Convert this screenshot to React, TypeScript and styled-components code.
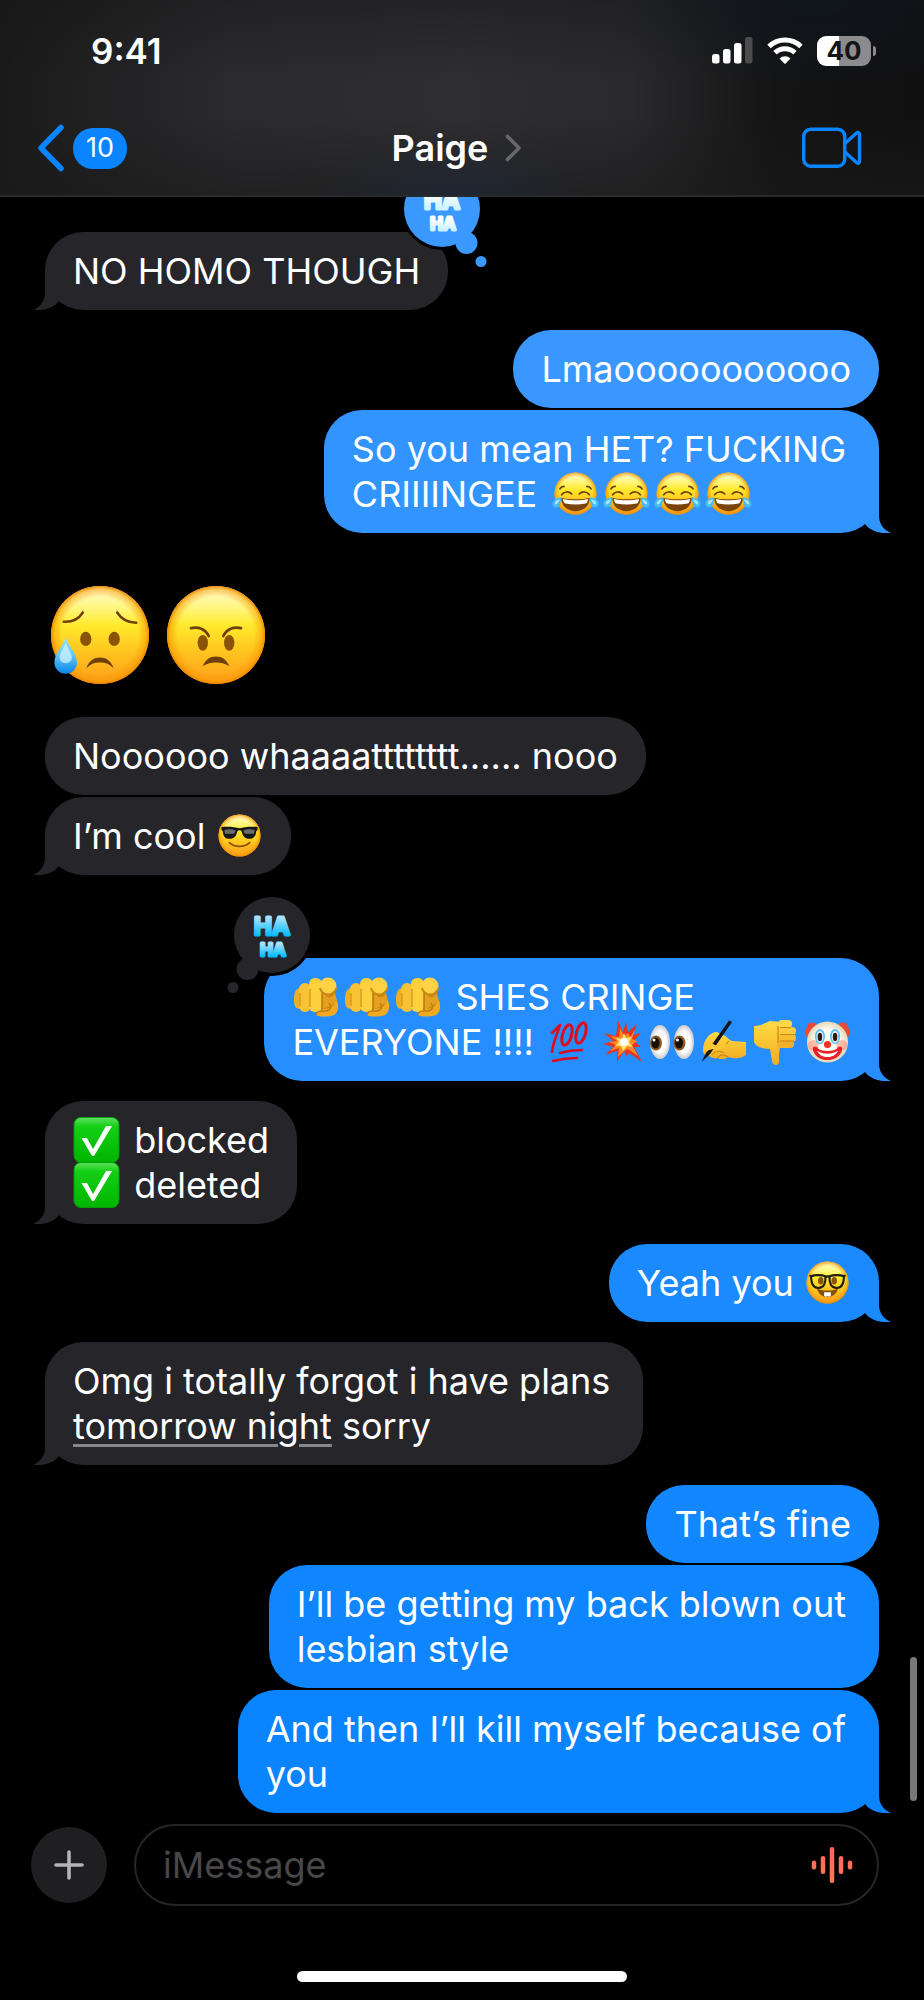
import React from "react";
import styled, { createGlobalStyle, css } from "styled-components";

const GlobalStyle = createGlobalStyle`
  * { box-sizing: border-box; }
  body {
    margin: 0;
    background: #000;
    color: #fff;
    font-family: Inter, "Liberation Sans", sans-serif;
  }
`;

const Page = styled.div`
  display: flex;
  flex-direction: column;
  min-height: 100vh;
`;

/* ---------- header ---------- */

const Header = styled.header`
  position: relative;
  z-index: 2;
  border-bottom: 2px solid #2a2a2c;
  background:
    radial-gradient(ellipse 14% 30% at 49% 100%, rgba(28, 42, 66, 0.5), transparent),
    radial-gradient(ellipse 22% 45% at 88% 0%, rgba(10, 22, 40, 0.4), transparent),
    linear-gradient(to bottom, rgba(20, 20, 21, 0.4), transparent 40%, transparent 60%, rgba(26, 26, 27, 0.6)),
    linear-gradient(to right, #1a1a1b, #2b2b2d 25%, #2e2e30 50%, #2a2a2c 68%, #141415 84%, #101011);
`;

const StatusBar = styled.div`
  display: flex;
  justify-content: space-between;
  align-items: center;
  height: 101px;
  padding: 0 48px 0 91px;
`;

const Clock = styled.time`
  font-size: 35px;
  line-height: 40px;
  font-weight: 600;
`;

const StatusIcons = styled.div`
  display: flex;
  align-items: center;
  gap: 14px;
`;

const Battery = styled.div`
  position: relative;
  display: flex;
  align-items: center;
  justify-content: center;
  width: 54px;
  height: 30px;
  margin-right: 5px;
  border-radius: 9px;
  background: linear-gradient(to right, #fff 40%, #8c8c8e 40%);
  color: #151516;
  font-size: 26px;
  line-height: 30px;
  font-weight: 700;

  &::after {
    content: "";
    position: absolute;
    left: 56px;
    top: 10px;
    width: 3px;
    height: 10px;
    border-radius: 0 4px 4px 0;
    background: #8c8c8e;
  }
`;

const NavBar = styled.nav`
  display: grid;
  grid-template-columns: 1fr auto 1fr;
  align-items: center;
  height: 94px;
  padding: 0 46px 0 36px;
`;

const PlainButton = styled.button`
  display: flex;
  align-items: center;
  padding: 0;
  border: 0;
  background: none;
  color: inherit;
  font: inherit;
  cursor: pointer;
`;

const BackButton = styled(PlainButton)`
  justify-self: start;
  gap: 7px;
`;

const CountBadge = styled.span`
  display: flex;
  align-items: center;
  justify-content: center;
  width: 54px;
  height: 41px;
  border-radius: 20px;
  background: #0a84ff;
  font-size: 27px;
  line-height: 32px;
`;

const TitleButton = styled(PlainButton)`
  gap: 17px;
  font-size: 36px;
  line-height: 45px;
  font-weight: 600;
`;

const VideoButton = styled(PlainButton)`
  justify-self: end;
  margin-right: 16px;
`;

/* ---------- thread ---------- */

const Thread = styled.main`
  position: relative;
  display: flex;
  flex-direction: column;
  gap: 20px;
  padding: 35px 45px 11px;
`;

const Group = styled.section<{ $mine?: boolean; $spaced?: boolean }>`
  display: flex;
  flex-direction: column;
  align-items: ${(p) => (p.$mine ? "flex-end" : "flex-start")};
  gap: 2px;
  ${(p) => p.$spaced && css`margin-top: 63px;`}
`;

const BigEmojiRow = styled.div`
  display: flex;
  gap: 18px;
  margin-top: 33px;
  margin-bottom: 31px;
  padding-left: 6px;
`;

const BubbleBox = styled.div<{ $color: string; $wrapped?: boolean }>`
  position: relative;
  isolation: isolate;
  padding: 17px ${(p) => (p.$wrapped ? 33 : 28)}px 16px 28px;
  border-radius: 38px;
  background: ${(p) => p.$color};
  font-size: 36px;
  line-height: 45px;
`;

const TailSvg = styled.svg<{ $mine?: boolean }>`
  position: absolute;
  z-index: -1;
  bottom: 0;
  ${(p) => (p.$mine ? "right: -12px;" : "left: -12px;")}
`;

const DateLink = styled.a`
  color: inherit;
  text-decoration: underline;
  text-decoration-color: #88888c;
  text-decoration-thickness: 3px;
  text-underline-offset: 5px;
`;

const ReactionSvg = styled.svg<{ $mine?: boolean }>`
  position: absolute;
  top: -65px;
  ${(p) => (p.$mine ? "right: -42px;" : "left: -40px;")}
`;

const ReactionText = styled.text`
  font-family: Inter, "Liberation Sans", sans-serif;
  font-weight: 700;
  stroke-width: 3px;
  stroke-linejoin: round;
`;

const ScrollThumb = styled.div`
  position: absolute;
  right: 7px;
  bottom: 23px;
  width: 7px;
  height: 144px;
  border-radius: 4px;
  background: #78787a;
`;

const InlineEmoji = styled.svg`
  width: 47px;
  height: 45px;
  vertical-align: top;
  overflow: visible;

  & + & { margin-left: 4px; }
`;

const EmojiRun = styled.span<{ $leading?: boolean }>`
  ${(p) => (p.$leading ? "margin-right: 4px;" : "margin-left: 5px;")}
`;

const LargeEmoji = styled.svg`
  width: 98px;
  height: 98px;
  overflow: visible;
`;

/* ---------- composer ---------- */

const Composer = styled.form`
  display: flex;
  align-items: center;
  gap: 27px;
  padding: 0 45px 0 31px;
`;

const AddButton = styled(PlainButton)`
  justify-content: center;
  flex: none;
  width: 76px;
  height: 76px;
  border-radius: 38px;
  background: #1f1f21;
`;

const Field = styled.div`
  display: flex;
  align-items: center;
  flex: 1;
  height: 82px;
  padding: 0 24px 0 27px;
  border: 2px solid #262628;
  border-radius: 41px;
`;

const TextInput = styled.input`
  flex: 1;
  min-width: 0;
  padding: 0;
  border: 0;
  outline: 0;
  background: none;
  color: #fff;
  font: inherit;
  font-size: 36px;
  line-height: 45px;

  &::placeholder { color: #48484b; opacity: 1; }
`;

const HomeArea = styled.footer`
  display: flex;
  justify-content: center;
  margin-top: auto;
  padding: 64px 0 18px;
`;

const HomeIndicator = styled.div`
  width: 330px;
  height: 11px;
  border-radius: 6px;
  background: #fff;
`;

/* ---------- drawings ---------- */

const HiddenDefs = styled.svg`
  position: absolute;
  width: 0;
  height: 0;
`;

const Gradients = () => (
  <HiddenDefs aria-hidden="true">
    <defs>
      <linearGradient id="face" x1="0" y1="0" x2="0" y2="1">
        <stop offset="0" stopColor="#fffbd2" />
        <stop offset="0.22" stopColor="#fff680" />
        <stop offset="0.4" stopColor="#ffea2c" />
        <stop offset="0.72" stopColor="#ffbe1e" />
        <stop offset="1" stopColor="#ff9f1c" />
      </linearGradient>
      <radialGradient id="rim">
        <stop offset="0.78" stopColor="#f58a00" stopOpacity="0" />
        <stop offset="0.93" stopColor="#f79800" stopOpacity="0.5" />
        <stop offset="1" stopColor="#ee8500" stopOpacity="0.95" />
      </radialGradient>
      <linearGradient id="tear" x1="0" y1="0" x2="0" y2="1">
        <stop offset="0" stopColor="#9fe4ff" />
        <stop offset="0.5" stopColor="#5fc8fb" />
        <stop offset="1" stopColor="#0a84e8" />
      </linearGradient>
      <linearGradient id="hand" x1="0" y1="0" x2="0" y2="1">
        <stop offset="0" stopColor="#ffdb45" />
        <stop offset="1" stopColor="#f3ac21" />
      </linearGradient>
      <linearGradient id="check" x1="0" y1="0" x2="0" y2="1">
        <stop offset="0" stopColor="#5fe05f" />
        <stop offset="0.2" stopColor="#14cf14" />
        <stop offset="1" stopColor="#00b400" />
      </linearGradient>
      <linearGradient id="haBlue" x1="0" y1="0" x2="0" y2="1">
        <stop offset="0.2" stopColor="#a6e2ff" />
        <stop offset="0.8" stopColor="#08bcff" />
      </linearGradient>
      <linearGradient id="haWhite" x1="0" y1="0" x2="0" y2="1">
        <stop offset="0.2" stopColor="#ffffff" />
        <stop offset="0.9" stopColor="#c4f0ff" />
      </linearGradient>
      <linearGradient id="wave" x1="0" y1="0" x2="0" y2="38" gradientUnits="userSpaceOnUse">
        <stop offset="0" stopColor="#ff5f63" />
        <stop offset="1" stopColor="#ff7d50" />
      </linearGradient>
      <radialGradient id="clown">
        <stop offset="0.6" stopColor="#fffdf4" />
        <stop offset="1" stopColor="#e3d6b4" />
      </radialGradient>
      <radialGradient id="eyeball">
        <stop offset="0.6" stopColor="#ffffff" />
        <stop offset="1" stopColor="#c9c9cf" />
      </radialGradient>
    </defs>
  </HiddenDefs>
);

const FaceBase = () => (
  <>
    <circle cx="50" cy="50" r="50" fill="url(#face)" />
    <circle cx="50" cy="50" r="50" fill="url(#rim)" />
  </>
);

const Brown = "#70400c";

const SadFace = () => (
  <LargeEmoji viewBox="0 0 100 100" role="img" aria-label="Sad but relieved face">
    <FaceBase />
    <g fill="none" stroke={Brown} strokeWidth="2.6" strokeLinecap="round">
      <path d="M13 36.500C21 37 28 34 32.500 27" />
      <path d="M67.500 27C72 34 79 37.500 87 37.500" />
    </g>
    <ellipse cx="35.500" cy="54" rx="5.800" ry="7.200" fill="#8a5406" />
    <ellipse cx="64.500" cy="54" rx="5.800" ry="7.200" fill="#8a5406" />
    <path d="M36 84C39 76 44 73 50 73S61 76 64 84C59 79 55 78 50 78S41 79 36 84Z" fill={Brown} />
    <path d="M15 51C16 61 26.500 67 26.500 78A11.500 11.500 0 0 1 3.500 78C3.500 67 14 61 15 51Z" fill="url(#tear)" />
    <path d="M15 58C18 66 22 69 21 75C19 80 11 80 9 75C8 69 12 66 15 58Z" fill="#d9f5ff" opacity="0.7" />
  </LargeEmoji>
);

const AngryFace = () => (
  <LargeEmoji viewBox="0 0 100 100" role="img" aria-label="Angry face">
    <FaceBase />
    <g fill="none" stroke={Brown} strokeWidth="2.8" strokeLinecap="round">
      <path d="M24.500 43C32 41 39 44 42.500 51" />
      <path d="M75.500 43C68 41 61 44 57.500 51" />
    </g>
    <ellipse cx="36.500" cy="58" rx="5.300" ry="8" fill="#8a5406" />
    <ellipse cx="63.500" cy="58" rx="5.300" ry="8" fill="#8a5406" />
    <path d="M36.500 82C39 75 44 72 50 72S61 75 63.500 82C59 79 55 78 50 78S41 79 36.500 82Z" fill={Brown} />
  </LargeEmoji>
);

const FaceEmoji = ({ label, children }: { label: string; children: React.ReactNode }) => (
  <InlineEmoji viewBox="0 0 47 45" role="img" aria-label={label}>
    <g transform="translate(2.500 0.500) scale(0.42)">
      <FaceBase />
      {children}
    </g>
  </InlineEmoji>
);

const Joy = () => (
  <FaceEmoji label="Face with tears of joy">
    <g fill="none" stroke={Brown} strokeLinecap="round" strokeWidth="4">
      <path d="M13 39C15 35 19 33 23 33" />
      <path d="M77 33C81 33 85 35 87 39" />
      <path d="M17 53C22 45 34 44 41 51" />
      <path d="M59 51C66 44 78 45 83 53" />
    </g>
    <path d="M16 60C34 65 66 65 84 60C84 80 68 92 50 92S16 80 16 60Z" fill="#7a430a" />
    <path d="M20 63C37 67 63 67 80 63C79 70 77 73 74 74C58 77 42 77 26 74C23 73 21 70 20 63Z" fill="#fff" />
    <path d="M17 60C4 58 -6 68 -5 76C-3 86 10 86 13 77Z" fill="#45bdf2" />
    <path d="M83 60C96 58 106 68 105 76C103 86 90 86 87 77Z" fill="#45bdf2" />
    <path d="M13 64C4 64 0 70 1 75C4 78 8 75 13 64Z" fill="#a9e7ff" />
    <path d="M87 64C96 64 100 70 99 75C96 78 92 75 87 64Z" fill="#a9e7ff" />
  </FaceEmoji>
);

const Cool = () => (
  <FaceEmoji label="Smiling face with sunglasses">
    <path d="M7 30C22 28 40 30 50 33C60 30 78 28 93 30V37L90 39C89 52 84 58 74 58C62 58 58 51 55 40C53 37 47 37 45 40C42 51 38 58 26 58C16 58 11 52 10 39L7 37Z" fill="#171717" />
    <path d="M14 37C22 34 34 35 41 38C39 42 38 45 37 46H16C15 43 14 40 14 37Z" fill="#6c6c6a" />
    <path d="M86 37C78 34 66 35 59 38C61 42 62 45 63 46H84C85 43 86 40 86 37Z" fill="#6c6c6a" />
    <path d="M26 67C38 79 62 79 74 67" fill="none" stroke="#8a5406" strokeWidth="4.500" strokeLinecap="round" />
  </FaceEmoji>
);

const Nerd = () => (
  <FaceEmoji label="Nerd face">
    <path d="M25 64C40 71 60 71 75 64C72 78 61 84 50 84S28 78 25 64Z" fill="#84500c" />
    <path d="M42 73H58V82C55 84 52 84 50 82C48 84 45 84 42 82Z" fill="#fff" />
    <ellipse cx="34" cy="46" rx="6.500" ry="9" fill="#8a5406" />
    <ellipse cx="66" cy="46" rx="6.500" ry="9" fill="#8a5406" />
    <g fill="none" stroke="#1d1d10" strokeWidth="5" strokeLinejoin="round">
      <path d="M11 35C20 31 37 32 45 35C46 51 42 63 28 63C15 63 11 51 11 35Z" />
      <path d="M89 35C80 31 63 32 55 35C54 51 58 63 72 63C85 63 89 51 89 35Z" />
      <path d="M45 38C48 35 52 35 55 38M7 34H12M93 34H88" />
    </g>
  </FaceEmoji>
);

const Clown = () => (
  <InlineEmoji viewBox="0 0 47 45" role="img" aria-label="Clown face">
    <g transform="translate(2.500 1) scale(0.42)">
      <path d="M24 8C14 0 2 4 2 14C-6 20 -4 36 4 40L22 24Z" fill="#e84a35" />
      <path d="M76 8C86 0 98 4 98 14C106 20 104 36 96 40L78 24Z" fill="#e84a35" />
      <circle cx="50" cy="50" r="49" fill="url(#clown)" />
      <circle cx="16" cy="58" r="13" fill="#ff8d73" opacity="0.55" />
      <circle cx="84" cy="58" r="13" fill="#ff8d73" opacity="0.55" />
      <ellipse cx="32" cy="37" rx="12" ry="18" fill="#60bdf0" />
      <ellipse cx="68" cy="37" rx="12" ry="18" fill="#60bdf0" />
      <ellipse cx="32" cy="38" rx="8" ry="14" fill="#fff" />
      <ellipse cx="68" cy="38" rx="8" ry="14" fill="#fff" />
      <ellipse cx="32" cy="38" rx="5.500" ry="10" fill="#2b1c12" />
      <ellipse cx="68" cy="38" rx="5.500" ry="10" fill="#2b1c12" />
      <circle cx="50" cy="56" r="8.500" fill="#ef3424" />
      <path d="M15 66C15 58 26 60 28 66C38 73 62 73 72 66C74 60 85 58 85 66C84 82 68 93 50 93S16 82 15 66Z" fill="#e8202a" />
      <path d="M25 71C40 80 60 80 75 71C70 82 60 86 50 86S30 82 25 71Z" fill="#fff" />
    </g>
  </InlineEmoji>
);

const PointAtYou = () => (
  <InlineEmoji viewBox="0 0 47 45" role="img" aria-label="Index pointing at the viewer">
    <path d="M9 13C4 13 2 17 2 24C2 31 3 34 9 34Z" fill="#eaae27" />
    <rect x="7" y="8" width="12" height="29" rx="6" fill="#f7c233" />
    <path d="M29 20L44 24C48 30 46 38 42 40C36 42 28 42 24 40C24 36 27 34 31 34Z" fill="#efaa22" />
    <path d="M30 10H43V26C43 31 37 34 30 34Z" fill="#c98512" />
    <path d="M31 16C34 24 40 24 43 18L45 26C40 30 34 34 30 34Z" fill="#e5a020" />
    <rect x="17" y="3" width="13" height="34" rx="6" fill="#ffd03d" />
    <path d="M18 14V32M8 18V31" stroke="#cf8f16" strokeWidth="1.200" fill="none" />
    <path d="M30 14V35" stroke="#b87a0e" strokeWidth="1.500" />
    <path d="M24 40C25 35 29 36 34 36C39 35 40 31 37 28" fill="none" stroke="#bf7d10" strokeWidth="1.500" />
    <circle cx="36" cy="11" r="8.500" fill="#ffd245" />
    <path d="M28 13C30 21 41 22 44.500 13" fill="none" stroke="#c98a15" strokeWidth="2" />
  </InlineEmoji>
);

const Hundred = () => (
  <InlineEmoji viewBox="0 0 47 45" role="img" aria-label="Hundred points">
    <g fill="none" stroke="#dc0d1d" strokeLinecap="round" strokeLinejoin="round">
      <path d="M3 13L11 5C8 14 4 23 3 32" strokeWidth="2.600" />
      <ellipse cx="18" cy="15" rx="4.500" ry="10.500" strokeWidth="3" transform="rotate(16 18 15)" />
      <ellipse cx="32" cy="13" rx="4.500" ry="10.500" strokeWidth="3" transform="rotate(16 32 13)" />
      <path d="M11 33C18 31 25 30 33 30" strokeWidth="2.600" />
      <path d="M4 41C12 39 20 38 28 38" strokeWidth="2.600" />
    </g>
  </InlineEmoji>
);

const Boom = () => (
  <InlineEmoji viewBox="0 0 47 45" role="img" aria-label="Collision">
    <path d="M18 1L23 12L26 2L28 12L37 4L33 15L41 13L34 21L41 27L34 27L42 42L29 33L27 37L24 31L17 42L17 31L5 35L13 27L3 24L13 21L4 13L16 16Z" fill="#e5341f" />
    <path d="M20 8L24 16L28 13L30 17L35 10L32 19L37 21L32 25L38 36L28 29L24 31L18 37L19 28L10 31L16 25L9 22L17 21L10 16L19 17Z" fill="#ff8a24" />
    <path d="M24 13L26 18L32 17L29 22L33 27L27 26L23 31L21 26L15 26L19 22L16 18L22 19Z" fill="#ffe36e" />
    <circle cx="24" cy="22" r="4" fill="#fff" />
  </InlineEmoji>
);

const Eyes = () => (
  <InlineEmoji viewBox="0 0 47 45" role="img" aria-label="Eyes">
    <ellipse cx="9" cy="22" rx="10" ry="17" fill="url(#eyeball)" />
    <ellipse cx="33" cy="22" rx="10" ry="17" fill="url(#eyeball)" />
    <ellipse cx="5" cy="23" rx="6" ry="7.500" fill="#8a5a20" />
    <ellipse cx="28.500" cy="23" rx="6" ry="7.500" fill="#8a5a20" />
    <ellipse cx="4.500" cy="23" rx="4" ry="5.500" fill="#160d05" />
    <ellipse cx="28" cy="23" rx="4" ry="5.500" fill="#160d05" />
    <circle cx="3" cy="20" r="1.500" fill="#fff" />
    <circle cx="26.500" cy="20" r="1.500" fill="#fff" />
  </InlineEmoji>
);

const Writing = () => (
  <InlineEmoji viewBox="0 0 47 45" role="img" aria-label="Writing hand">
    <path d="M1 30C1 20 8 12 15 12L20 15C24 15 27 20 30 21L44 22V35C38 40 30 38 26 37C22 40 17 39 15 38C9 39 8 36 6 35C2 35 1 33 1 30Z" fill="url(#hand)" />
    <path d="M15 28C20 27 24 25 27 21M10 35C13 31 18 31 22 33M16 38C18 34 22 34 26 37" fill="none" stroke="#c98718" strokeWidth="1.200" />
    <path d="M-0.500 42L4 33L27 0.500L30 2L8 34Z" fill="#141414" />
    <path d="M2 28C4 22 9 22 13 25C17 27 21 25 24 22C25 28 17 31 11 29C7 30 3 33 2 28Z" fill="#fbc733" />
  </InlineEmoji>
);

const ThumbDown = () => (
  <InlineEmoji viewBox="0 0 47 45" role="img" aria-label="Thumbs down">
    <path d="M1 6C8 6 12 3 17 1L28 2V23C26 28 26 35 26 42C26 46 19 46 19 41L17 29C10 29 3 27 1 22Z" fill="url(#hand)" />
    <rect x="25" y="0" width="14" height="8" rx="4" fill="#ffd747" />
    <rect x="25" y="7" width="18" height="8" rx="4" fill="#fdca3a" />
    <rect x="25" y="14" width="18" height="8" rx="4" fill="#f8bd30" />
    <rect x="24" y="20" width="17" height="8" rx="4" fill="#f1b029" />
    <path d="M27 7.500H38M27 14.500H41M27 21H41M25 6V23" stroke="#c98718" strokeWidth="1.200" fill="none" />
  </InlineEmoji>
);

const Check = () => (
  <InlineEmoji viewBox="0 0 47 45" role="img" aria-label="Check mark">
    <rect x="1" y="-0.500" width="45" height="45" rx="7" fill="url(#check)" stroke="#009c08" />
    <path d="M8.500 20H14L20 31L33 8H39L21 38H19Z" fill="#fff" />
  </InlineEmoji>
);

const Signal = () => (
  <svg width="41" height="27" viewBox="0 0 41 27" aria-label="Signal strength" role="img">
    <rect x="0" y="17" width="7.500" height="9.500" rx="2.500" fill="#fff" />
    <rect x="11" y="12" width="7.500" height="14.500" rx="2.500" fill="#fff" />
    <rect x="22" y="6" width="7.500" height="20.500" rx="2.500" fill="#fff" />
    <rect x="33" y="0" width="7.500" height="26.500" rx="2.500" fill="#4c4c4e" />
  </svg>
);

const Wifi = () => (
  <svg width="36" height="27" viewBox="0 0 36 27" aria-label="Wi-Fi" role="img">
    <g fill="none" stroke="#fff" strokeWidth="5">
      <path d="M2 9.500A23 23 0 0 1 34 9.500" />
      <path d="M8 15.800A14.500 14.500 0 0 1 28 15.800" />
    </g>
    <path d="M12.500 21.500A8 8 0 0 1 23.500 21.500L18.700 26.400Q18 27 17.300 26.400Z" fill="#fff" />
  </svg>
);

const TAIL = "M0 0H40V25C40 33 45 39 52 42C43 43 32 41 26 33L0 30Z";

const Tail = ({ mine, color }: { mine?: boolean; color: string }) => (
  <TailSvg $mine={mine} width="52" height="42" viewBox="0 0 52 42" aria-hidden="true">
    <path d={TAIL} fill={color} transform={mine ? undefined : "translate(52 0) scale(-1 1)"} />
  </TailSvg>
);

const Haha = ({ mine }: { mine?: boolean }) => {
  const s = mine ? 1 : -1;
  const color = mine ? "#3a98ff" : "#26252a";
  const ink = mine ? "url(#haWhite)" : "url(#haBlue)";
  return (
    <ReactionSvg $mine={mine} width="96" height="104" viewBox="-48 -42 96 104" role="img" aria-label="Haha reaction">
      <circle r="41" fill="#000" />
      <circle cx={s * 24.5} cy="34" r="11" fill={color} />
      <circle r="38" fill={color} />
      <circle cx={s * 39} cy="52.500" r="5.500" fill={color} />
      <ReactionText textAnchor="middle" x="0" y="0" fontSize="24" fill={ink} stroke={ink}>HA</ReactionText>
      <ReactionText textAnchor="middle" x="1" y="21" fontSize="17" fill={ink} stroke={ink}>HA</ReactionText>
    </ReactionSvg>
  );
};

type BubbleProps = {
  mine?: boolean;
  color?: string;
  tail?: boolean;
  haha?: boolean;
  wrapped?: boolean;
  children: React.ReactNode;
};

const Bubble = ({ mine, color = "#26252a", tail, haha, wrapped, children }: BubbleProps) => (
  <BubbleBox $color={color} $wrapped={wrapped}>
    {tail && <Tail mine={mine} color={color} />}
    {children}
    {haha && <Haha mine={!mine} />}
  </BubbleBox>
);

export default function App() {
  return (
    <Page>
      <GlobalStyle />
      <Gradients />
      <Header>
        <StatusBar>
          <Clock>9:41</Clock>
          <StatusIcons>
            <Signal />
            <Wifi />
            <Battery>40</Battery>
          </StatusIcons>
        </StatusBar>
        <NavBar>
          <BackButton type="button" aria-label="Back, 10 unread">
            <svg width="30" height="50" viewBox="0 0 30 50" aria-hidden="true">
              <path d="M25 4.500L5 25L25 45.500" fill="none" stroke="#0a84ff" strokeWidth="5.500" strokeLinecap="round" strokeLinejoin="round" />
            </svg>
            <CountBadge>10</CountBadge>
          </BackButton>
          <TitleButton type="button">
            Paige
            <svg width="17" height="28" viewBox="0 0 17 28" aria-hidden="true">
              <path d="M2.500 2.500L14 14L2.500 25.500" fill="none" stroke="#69696c" strokeWidth="3.600" strokeLinecap="round" strokeLinejoin="round" />
            </svg>
          </TitleButton>
          <VideoButton type="button" aria-label="Video call">
            <svg width="60" height="42" viewBox="0 0 60 42" aria-hidden="true">
              <g fill="none" stroke="#0a84ff" strokeWidth="3.400" strokeLinejoin="round">
                <rect x="1.700" y="2.200" width="41" height="37" rx="7" />
                <path d="M43 16.500L54.500 6C56 4.800 57.500 5.500 57.500 7V34.500C57.500 36 56 36.800 54.500 35.500L43 25" />
              </g>
            </svg>
          </VideoButton>
        </NavBar>
      </Header>

      <Thread>
        <Group>
          <Bubble tail haha>NO HOMO THOUGH</Bubble>
        </Group>
        <Group $mine>
          <Bubble mine color="#3997ff">Lmaooooooooooo</Bubble>
          <Bubble mine tail wrapped color="#3294ff">
            So you mean HET? FUCKING
            <br />
            CRIIIINGEE <EmojiRun><Joy /><Joy /><Joy /><Joy /></EmojiRun>
          </Bubble>
        </Group>
        <Group>
          <BigEmojiRow>
            <SadFace />
            <AngryFace />
          </BigEmojiRow>
          <Bubble>Noooooo whaaaatttttttt...... nooo</Bubble>
          <Bubble tail>I’m cool <Cool /></Bubble>
        </Group>
        <Group $mine $spaced>
          <Bubble mine tail haha color="#268eff">
            <EmojiRun $leading><PointAtYou /><PointAtYou /><PointAtYou /></EmojiRun> SHES CRINGE
            <br />
            EVERYONE !!!! <EmojiRun><Hundred /><Boom /><Eyes /><Writing /><ThumbDown /><Clown /></EmojiRun>
          </Bubble>
        </Group>
        <Group>
          <Bubble tail>
            <EmojiRun $leading><Check /></EmojiRun> blocked
            <br />
            <EmojiRun $leading><Check /></EmojiRun> deleted
          </Bubble>
        </Group>
        <Group $mine>
          <Bubble mine tail color="#1c8aff">Yeah you <Nerd /></Bubble>
        </Group>
        <Group>
          <Bubble tail wrapped>
            Omg i totally forgot i have plans
            <br />
            <DateLink href="#tomorrow-night">tomorrow night</DateLink> sorry
          </Bubble>
        </Group>
        <Group $mine>
          <Bubble mine color="#1387ff">That’s fine</Bubble>
          <Bubble mine wrapped color="#0f85ff">
            I’ll be getting my back blown out
            <br />
            lesbian style
          </Bubble>
          <Bubble mine tail wrapped color="#0b84ff">
            And then I’ll kill myself because of
            <br />
            you
          </Bubble>
        </Group>
        <ScrollThumb />
      </Thread>

      <Composer onSubmit={(e) => e.preventDefault()}>
        <AddButton type="button" aria-label="Add">
          <svg width="30" height="30" viewBox="0 0 30 30" aria-hidden="true">
            <path d="M15 2V28M2 15H28" stroke="#b4b4b8" strokeWidth="3.600" strokeLinecap="round" />
          </svg>
        </AddButton>
        <Field>
          <TextInput type="text" placeholder="iMessage" aria-label="iMessage" />
          <PlainButton type="button" aria-label="Record audio">
            <svg width="42" height="38" viewBox="0 0 42 38" aria-hidden="true">
              <g fill="url(#wave)">
                <rect x="0.750" y="14.500" width="4.500" height="9" rx="2.250" />
                <rect x="9.750" y="10" width="4.500" height="18" rx="2.250" />
                <rect x="18.750" y="1" width="4.500" height="36" rx="2.250" />
                <rect x="27.750" y="10" width="4.500" height="18" rx="2.250" />
                <rect x="36.750" y="14.500" width="4.500" height="9" rx="2.250" />
              </g>
            </svg>
          </PlainButton>
        </Field>
      </Composer>

      <HomeArea>
        <HomeIndicator />
      </HomeArea>
    </Page>
  );
}
